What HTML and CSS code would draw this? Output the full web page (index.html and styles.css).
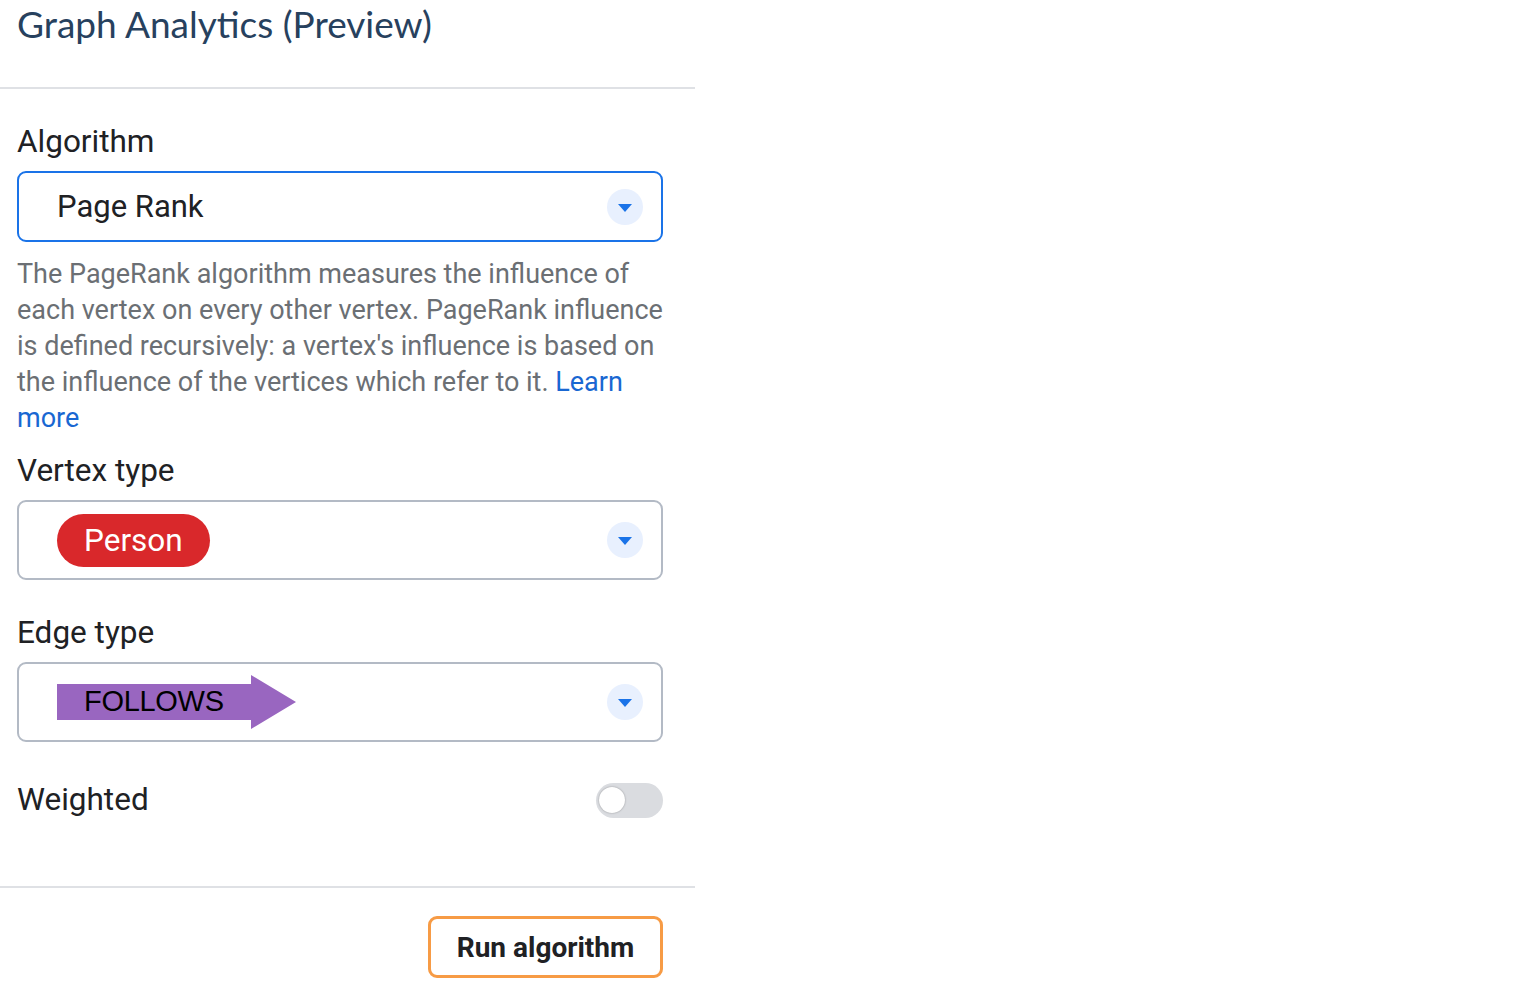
FILE: index.html
```html
<!DOCTYPE html>
<html lang="en">
<head>
    <meta charset="UTF-8">
    <meta name="viewport" content="width=device-width, initial-scale=1.0">
    <title>Graph Analytics (Preview)</title>
    <link rel="stylesheet" href="styles.css">
</head>
<body>
    <div class="panel">
        <div class="panel-header">
            <h1>Graph Analytics (Preview)</h1>
        </div>

        <div class="panel-body">
            <!-- Algorithm picker -->
            <div class="field">
                <label class="field-label">Algorithm</label>
                <div class="select select-active">
                    <span class="select-value">Page Rank</span>
                    <span class="select-caret"><svg width="16" height="10" viewBox="0 0 16 10"><path d="M1 1h14L8 9z" fill="#1a73e8"/></svg></span>
                </div>
            </div>

            <p class="description">The PageRank algorithm measures the influence of each vertex on every other vertex. PageRank influence is defined recursively: a vertex's influence is based on the influence of the vertices which refer to it. <a href="#">Learn more</a></p>

            <div class="field field-vertex">
                <label class="field-label">Vertex type</label>
                <div class="select">
                    <span class="chip">Person</span>
                    <span class="select-caret"><svg width="16" height="10" viewBox="0 0 16 10"><path d="M1 1h14L8 9z" fill="#1a73e8"/></svg></span>
                </div>
            </div>

            <div class="field field-edge">
                <label class="field-label">Edge type</label>
                <div class="select">
                    <span class="edge-tag">
                        <svg class="edge-arrow" width="240" height="54" viewBox="0 0 240 54"><path d="M0 9h194V0l45 27-45 27v-9H0z" fill="#9966c0"/></svg>
                        <span class="edge-text">FOLLOWS</span>
                    </span>
                    <span class="select-caret"><svg width="16" height="10" viewBox="0 0 16 10"><path d="M1 1h14L8 9z" fill="#1a73e8"/></svg></span>
                </div>
            </div>

            <div class="toggle-row">
                <span class="field-label">Weighted</span>
                <span class="toggle"><span class="toggle-knob"></span></span>
            </div>
        </div>

        <div class="panel-footer">
            <button type="button">Run algorithm</button>
        </div>
    </div>
</body>
</html>
```

FILE: styles.css
```css
body {
    margin: 0;
    font-family: Roboto, "Liberation Sans", Arial, sans-serif;
    background: #fff;
    color: #202124;
}
.panel {
    width: 695px;
}
.panel-header {
    height: 87px;
    border-bottom: 2px solid #dfe1e5;
    padding-left: 17px;
}
.panel-header h1 {
    margin: 0;
    font-family: Lato, "Open Sans", sans-serif;
    font-weight: 400;
    font-size: 37px;
    line-height: 48px;
    color: #27415e;
}
.panel-body {
    padding: 35px 32px 0 17px;
    height: 799px;
    box-sizing: border-box;
    border-bottom: 2px solid #dfe1e5;
}
.field {
    display: flex;
    flex-direction: column;
    gap: 11px;
}
.field-label {
    font-size: 31.5px;
    line-height: 36px;
    color: #202124;
}
.select {
    display: flex;
    align-items: center;
    justify-content: space-between;
    height: 80px;
    box-sizing: border-box;
    border: 2px solid #b3bac5;
    border-radius: 9px;
    padding: 0 18px 0 38px;
}
.select-active {
    height: 71px;
    border-color: #1a73e8;
}
.select-value {
    font-size: 31px;
}
.select-caret {
    width: 36px;
    height: 36px;
    border-radius: 50%;
    background: #e8f0fe;
    display: flex;
    align-items: center;
    justify-content: center;
}
.select-caret svg {
    margin-top: 2px;
}
.description {
    margin: 14px 0 0;
    font-size: 27px;
    line-height: 36px;
    color: #6b6f74;
}
.description a {
    color: #1967d2;
    text-decoration: none;
}
.field-vertex {
    margin-top: 17px;
}
.field-edge {
    margin-top: 35px;
}
.chip {
    background: #d9282b;
    color: #fff;
    font-size: 31.5px;
    height: 53px;
    line-height: 53px;
    padding: 0 27px;
    border-radius: 27px;
}
.edge-tag {
    position: relative;
    width: 240px;
    height: 54px;
}
.edge-arrow {
    display: block;
}
.edge-text {
    position: absolute;
    left: 27px;
    top: 0;
    line-height: 52px;
    font-family: "Liberation Sans", Arial, sans-serif;
    font-size: 29px;
    letter-spacing: -0.3px;
    color: #000;
}
.toggle-row {
    margin-top: 40px;
    display: flex;
    align-items: center;
    justify-content: space-between;
}
.toggle {
    width: 67px;
    height: 35px;
    border-radius: 18px;
    background: #dadce0;
    display: flex;
    align-items: center;
    padding-left: 3px;
    box-sizing: border-box;
}
.toggle-knob {
    width: 26px;
    height: 26px;
    border-radius: 50%;
    background: #fff;
    box-shadow: 0 0 2px rgba(0, 0, 0, 0.35);
}
.panel-footer {
    display: flex;
    justify-content: flex-end;
    padding: 28px 32px 0 0;
}
button {
    width: 235px;
    height: 62px;
    background: #fff;
    border: 3px solid #f79b45;
    border-radius: 9px;
    font-family: Roboto, "Liberation Sans", Arial, sans-serif;
    font-weight: 700;
    font-size: 28px;
    color: #202124;
    cursor: pointer;
}
```
